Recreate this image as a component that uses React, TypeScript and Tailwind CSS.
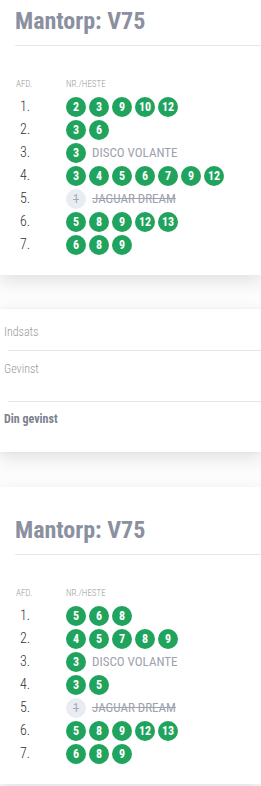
import React from "react";

type Leg = { balls: number[]; name?: string; scratched?: boolean };

const card1: Leg[] = [
  { balls: [2, 3, 9, 10, 12] },
  { balls: [3, 6] },
  { balls: [3], name: "DISCO VOLANTE" },
  { balls: [3, 4, 5, 6, 7, 9, 12] },
  { balls: [1], name: "JAGUAR DREAM", scratched: true },
  { balls: [5, 8, 9, 12, 13] },
  { balls: [6, 8, 9] },
];

const card3: Leg[] = [
  { balls: [5, 6, 8] },
  { balls: [4, 5, 7, 8, 9] },
  { balls: [3], name: "DISCO VOLANTE" },
  { balls: [3, 5] },
  { balls: [1], name: "JAGUAR DREAM", scratched: true },
  { balls: [5, 8, 9, 12, 13] },
  { balls: [6, 8, 9] },
];

const font = "font-['Roboto',_'Liberation_Sans',_sans-serif] [font-stretch:condensed]";

function Ball({ n, scratched }: { n: number; scratched?: boolean }) {
  if (scratched) {
    return (
      <div className="w-5 h-5 rounded-full bg-[#e9ecf3] text-[#a4a9b6] flex items-center justify-center text-[12px] line-through">
        {n}
      </div>
    );
  }
  return (
    <div className="w-5 h-5 rounded-full bg-[#1fa35d] text-white flex items-center justify-center text-[12px] font-bold">
      {n}
    </div>
  );
}

function RaceCard({ legs, className }: { legs: Leg[]; className?: string }) {
  return (
    <div className={`bg-white shadow-[0_6px_16px_rgba(0,0,0,0.11)] pt-[29px] pb-[19px] ${className ?? ""}`}>
      <div className="ml-[15px] h-[28px] leading-[28px] text-[24px] font-bold text-[#8b90a0]">Mantorp: V75</div>
      <div className="ml-[15px] mt-[10px] h-px bg-[#e8e8e8]" />
      <div className="mt-[33px] ml-[16px] flex h-3 items-center text-[9px] text-[#9a9a9a] font-light">
        <div className="w-[50px]">AFD.</div>
        <div>NR./HESTE</div>
      </div>
      <div className="mt-[4px] ml-[15px]">
        {legs.map((leg, i) => (
          <div key={i} className="flex h-[23px] items-center">
            <div className="w-[51px] pl-[5px] text-[14px] text-[#333] font-light">{i + 1}.</div>
            <div className="flex gap-[3px] items-center">
              {leg.balls.map((b) => (
                <Ball key={b} n={b} scratched={leg.scratched} />
              ))}
              {leg.name && (
                <span
                  className={`ml-[3px] text-[13px] text-[#9ea2ae] ${leg.scratched ? "line-through" : ""}`}
                >
                  {leg.name}
                </span>
              )}
            </div>
          </div>
        ))}
      </div>
    </div>
  );
}

export default function App() {
  return (
    <div className={`${font} bg-[#fcfcfc] w-[261px] h-[786px] overflow-hidden`}>
      <RaceCard legs={card1} className="-mt-[22px]" />
      <div className="mt-[34px] bg-white shadow-[0_6px_16px_rgba(0,0,0,0.11),0_0_3px_rgba(0,0,0,0.05)] h-[143px]">
        <div className="pt-[15px] pl-[4px] h-[31px] text-[12px] leading-4 text-[#9a9a9a] font-light">Indsats</div>
        <div className="ml-[8px] mt-[10px] h-px bg-[#e6e6e6]" />
        <div className="pt-[10px] pl-[4px] h-[50px] text-[12px] leading-4 text-[#9a9a9a] font-light">Gevinst</div>
        <div className="ml-[8px] h-px bg-[#e6e6e6]" />
        <div className="pt-[9px] pl-[4px] text-[12px] leading-4 text-[#7d8190] font-bold">Din gevinst</div>
      </div>
      <RaceCard legs={card3} className="mt-[35px]" />
    </div>
  );
}
